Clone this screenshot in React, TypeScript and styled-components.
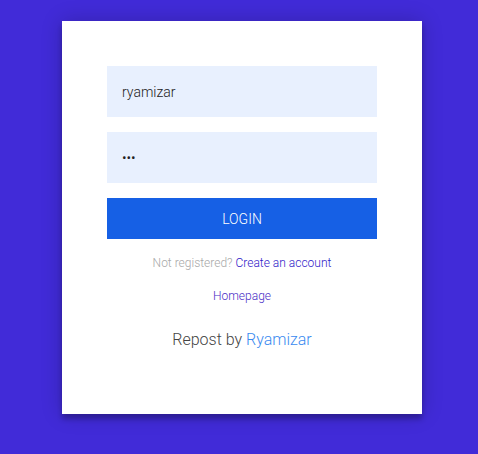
import React from "react";
import styled, { createGlobalStyle } from "styled-components";

const Global = createGlobalStyle`
  html, body {
    margin: 0;
    padding: 0;
    background: #412bd8;
    font-family: Roboto, "Liberation Sans", sans-serif;
  }
`;

const Page = styled.div`
  min-height: 454px;
  padding: 21px 0 0 62px;
  box-sizing: border-box;
`;

const Card = styled.form`
  width: 360px;
  box-sizing: border-box;
  background: #ffffff;
  padding: 45px 45px 64px;
  display: flex;
  flex-direction: column;
  box-shadow: 0 0 20px rgba(0, 0, 0, 0.2), 0 5px 5px rgba(0, 0, 0, 0.24);
`;

const Field = styled.input`
  display: block;
  width: 100%;
  height: 51px;
  box-sizing: border-box;
  margin: 0 0 15px;
  padding: 0 15px;
  border: 0;
  outline: 0;
  background: #e8f0fe;
  color: #222;
  font-family: Roboto, "Liberation Sans", sans-serif;
  font-weight: 300;
  font-size: 14px;
`;

const Button = styled.button`
  width: 100%;
  height: 41px;
  border: 0;
  padding: 0;
  background: #1660e5;
  color: #ffffff;
  font-family: Roboto, "Liberation Sans", sans-serif;
  font-weight: 300;
  font-size: 14px;
  text-transform: uppercase;
  cursor: pointer;
`;

const Note = styled.p<{ $top: number; $size: number; $lh: number; $color: string }>`
  margin: ${(p) => p.$top}px 0 0;
  text-align: center;
  font-size: ${(p) => p.$size}px;
  line-height: ${(p) => p.$lh}px;
  font-weight: 300;
  color: ${(p) => p.$color};
`;

const Link = styled.a<{ $color: string }>`
  color: ${(p) => p.$color};
  text-decoration: none;
`;

export default function App() {
  return (
    <>
      <Global />
      <Page>
        <Card onSubmit={(e) => e.preventDefault()}>
          <Field type="text" defaultValue="ryamizar" />
          <Field type="password" defaultValue="abc" />
          <Button type="submit">login</Button>
          <Note $top={15} $size={12} $lh={18} $color="#a8a8a8">
            Not registered? <Link $color="#2f20c8" href="#">Create an account</Link>
          </Note>
          <Note $top={15} $size={12} $lh={18} $color="#a8a8a8">
            <Link $color="#4a2ec6" href="#">Homepage</Link>
          </Note>
          <Note $top={25} $size={16} $lh={20} $color="#444">
            Repost by <Link $color="#3a8af0" href="#">Ryamizar</Link>
          </Note>
        </Card>
      </Page>
    </>
  );
}
